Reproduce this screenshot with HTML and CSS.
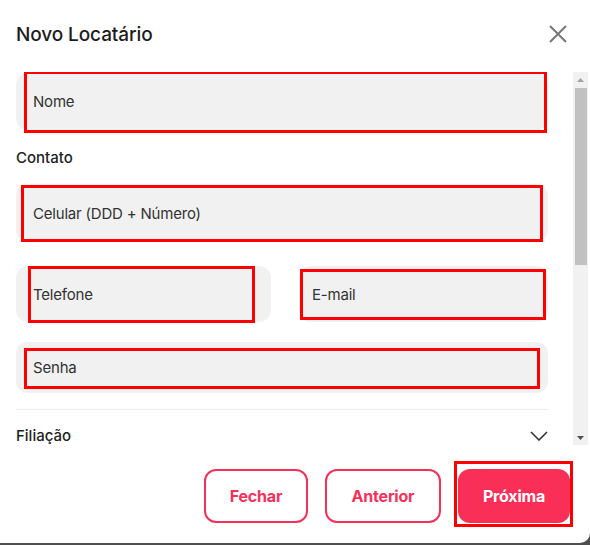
FILE: index.html
```html
<!DOCTYPE html>
<html lang="pt">
<head>
<meta charset="utf-8">
<title>Novo Locatário</title>
<link rel="stylesheet" href="styles.css">
</head>
<body>
<div class="modal">
  <header class="modal-header">
    <h1 class="modal-title">Novo Locatário</h1>
    <button class="close-btn" aria-label="Fechar">
      <svg width="18" height="18" viewBox="0 0 18 18"><path d="M1 1 L17 17 M17 1 L1 17" stroke="#777" stroke-width="2" fill="none"/></svg>
    </button>
  </header>

  <div class="body-wrap">
    <div class="modal-body">
      <div class="field field-nome">
        <span class="field-text">Nome</span>
        <span class="mark mark-nome"></span>
      </div>

      <h2 class="section-label">Contato</h2>

      <div class="field field-celular">
        <span class="field-text">Celular (DDD + Número)</span>
        <span class="mark mark-celular"></span>
      </div>

      <div class="field-row">
        <div class="field field-tel">
          <span class="field-text">Telefone</span>
          <span class="mark mark-tel"></span>
        </div>
        <div class="field field-email">
          <span class="field-text">E-mail</span>
          <span class="mark mark-email"></span>
        </div>
      </div>

      <div class="field field-senha">
        <span class="field-text">Senha</span>
        <span class="mark mark-senha"></span>
      </div>

      <div class="accordion">
        <div class="accordion-row">
          <span>Filiação</span>
          <svg width="18" height="10" viewBox="0 0 18 10"><path d="M1 1 L9 9 L17 1" stroke="#333" stroke-width="1.6" fill="none"/></svg>
        </div>
      </div>
    </div>

    <div class="scrollbar" aria-hidden="true">
      <div class="sb-btn">
        <svg width="7" height="4" viewBox="0 0 7 4"><polygon points="0,4 7,4 3.5,0" fill="#a3a3a3"/></svg>
      </div>
      <div class="sb-track"><div class="sb-thumb"></div></div>
      <div class="sb-btn">
        <svg width="7" height="4" viewBox="0 0 7 4"><polygon points="0,0 7,0 3.5,4" fill="#505050"/></svg>
      </div>
    </div>
  </div>

  <footer class="modal-footer">
    <button class="btn btn-outline btn-fechar">Fechar</button>
    <button class="btn btn-outline btn-anterior">Anterior</button>
    <button class="btn btn-primary">Próxima<span class="mark mark-proxima"></span></button>
  </footer>
</div>
</body>
</html>
```

FILE: styles.css
```css
* { box-sizing: border-box; }

html, body {
  margin: 0;
  padding: 0;
  background: #4e4e4e;
  width: 590px;
  height: 545px;
  overflow: hidden;
}

body {
  font-family: Inter, "Noto Sans", "Liberation Sans", sans-serif;
  color: #222;
}

.modal {
  width: 590px;
  height: 543px;
  background: #fff;
  border-radius: 0 0 10px 0;
  display: flex;
  flex-direction: column;
}

.modal-header {
  height: 68px;
  display: flex;
  align-items: center;
  justify-content: space-between;
  padding: 0 23px 0 16px;
  flex: none;
}

.modal-title {
  margin: 0;
  font-size: 19px;
  font-weight: 500;
  color: #1c1c1c;
  letter-spacing: -0.1px;
}

.close-btn {
  border: 0;
  background: none;
  padding: 0;
  width: 18px;
  height: 18px;
  display: flex;
}

.body-wrap {
  margin: 4px 0 0 16px;
  height: 373px;
  flex: none;
  display: flex;
  gap: 25px;
}

.modal-body {
  width: 532px;
  height: 100%;
  overflow: hidden;
}

.scrollbar {
  width: 15px;
  height: 100%;
  background: #f1f1f1;
  display: flex;
  flex-direction: column;
}

.sb-btn {
  height: 15px;
  flex: none;
  display: flex;
  align-items: center;
  justify-content: center;
}

.sb-track {
  flex: 1;
  padding: 1px 1px 0 2px;
}

.sb-thumb {
  height: 177px;
  background: #c1c1c1;
}

.field {
  position: relative;
  background: #f1f1f1;
  border-radius: 12px;
  display: flex;
  align-items: center;
  padding-left: 17px;
}

.field-text {
  font-size: 15px;
  color: #333;
  letter-spacing: -0.2px;
}

.mark {
  position: absolute;
  border: 3px solid #ff0000;
  pointer-events: none;
}

.field-nome { margin-top: 1px; height: 57px; }
.mark-nome { left: 8px; top: -2px; width: 523px; height: 62px; }

.section-label {
  margin: 19px 0 0;
  font-size: 15px;
  font-weight: 500;
  color: #222;
  line-height: 18px;
}

.field-celular { margin-top: 17px; height: 58px; }
.mark-celular { left: 5px; top: 1px; width: 522px; height: 57px; }

.field-row {
  margin-top: 24px;
  display: grid;
  grid-template-columns: 255px 1fr;
  column-gap: 28px;
}

.field-tel { height: 56px; }
.mark-tel { left: 12px; top: 0; width: 227px; height: 57px; }

.field-email { height: 56px; padding-left: 13px; }
.mark-email { left: 1px; top: 3px; width: 246px; height: 51px; }

.field-senha { margin-top: 20px; height: 51px; }
.mark-senha { left: 8px; top: 6px; width: 516px; height: 41px; }

.accordion {
  margin-top: 16px;
}

.accordion-row {
  border-top: 1px solid #ececec;
  padding-top: 17px;
  display: flex;
  align-items: center;
  justify-content: space-between;
  font-size: 15px;
  line-height: 18px;
  font-weight: 500;
  color: #222;
}

.modal-footer {
  flex: 1;
  display: flex;
  justify-content: flex-end;
  align-items: flex-start;
  padding: 24px 20px 0 0;
  gap: 17px;
}

.btn {
  position: relative;
  height: 54px;
  border-radius: 12px;
  font-family: inherit;
  font-size: 16px;
  font-weight: 700;
  letter-spacing: -0.2px;
}

.btn-outline {
  background: #fff;
  border: 2px solid #f7305a;
  color: #f7305a;
}

.btn-fechar { width: 104px; }
.btn-anterior { width: 116px; }

.btn-primary {
  width: 112px;
  background: #f92f57;
  border: 0;
  color: #fff;
}

.mark-proxima { left: -4px; top: -8px; width: 119px; height: 66px; }
```
